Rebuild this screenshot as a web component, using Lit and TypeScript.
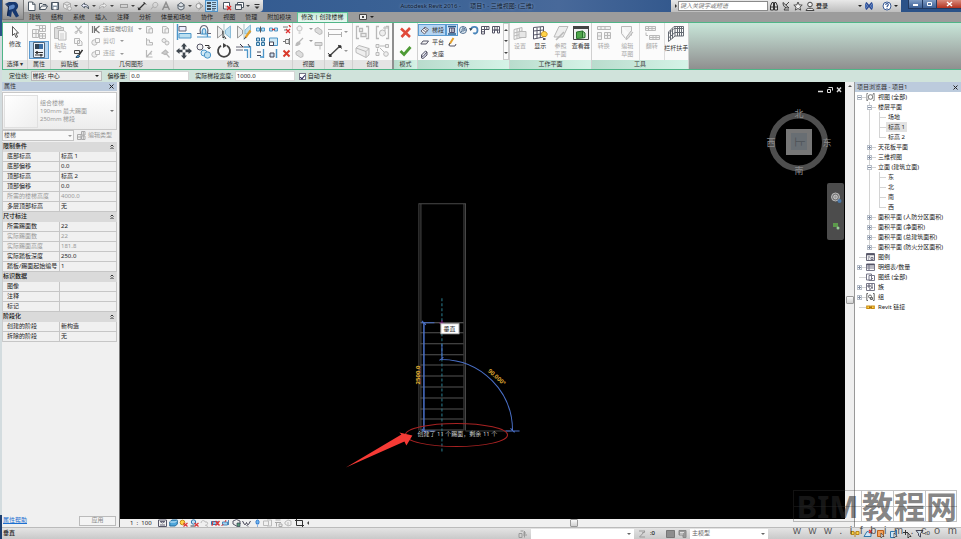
import { LitElement, html, svg, css, nothing, TemplateResult } from "lit";
import { customElement, state } from "lit/decorators.js";
import { classMap } from "lit/directives/class-map.js";

type Art = [number, number, unknown];

const G = "#b9b9b9";
const K = "#4a5560";
const B = "#4d96c9";

const art: Record<string, Art> = {
  newdoc: [10, 10, svg`<path d="M2.5 1h4L9 3.5V9.5H2.5z" fill="#fff" stroke=${K}/><path d="M6.5 1v2.5H9" fill="none" stroke=${K} stroke-width=".8"/>`],
  open: [10, 10, svg`<path d="M1.5 8.5v-6h2.5l1 1h3v1.5M1.5 8.5l2-3.5h6l-2 3.5z" fill="#f4f4f4" stroke=${K}/>`],
  save: [10, 10, svg`<path d="M1.5 1.5h7v7h-7z" fill="#8b98a5" stroke=${K}/><path d="M3 2h4v2.500H3zM3.500 6h3v2.500h-3z" fill="#fff"/>`],
  sync: [10, 10, svg`<path d="M5 1l3.500 1.500v4L5 8.500 1.500 6.500v-4z M1.500 2.500L5 4.500l3.500-2M5 4.500v4" fill="#eee" stroke="#aaa"/><circle cx="7.500" cy="7.500" r="2" fill="#e5e5e5" stroke="#aaa"/>`],
  undo: [10, 10, svg`<path d="M1.500 4.500l3-2.500v1.500c3 0 4.500 1.500 4 4.500-.5-2-2-2.500-4-2.500V7z" fill="#eef" stroke=${K} stroke-width=".9"/>`],
  redo: [10, 10, svg`<path d="M8.500 4.500l-3-2.500v1.500c-3 0-4.500 1.500-4 4.500.5-2 2-2.500 4-2.500V7z" fill="#eee" stroke="#aaa" stroke-width=".9"/>`],
  measure: [10, 10, svg`<path d="M1.500 3v4M8.500 3v4M2 3.500h6M2 6.500h6" fill="none" stroke="#9c9c9c"/>`],
  dim: [10, 10, svg`<path d="M2 8L8 2" stroke="#333" stroke-width="1.200"/><path d="M1 6.500L3.500 9M6.500 1L9 3.500" stroke="#333"/><circle cx="2" cy="8" r="1.200" fill="#333"/>`],
  tag: [10, 10, svg`<path d="M2 8.500l2-3C3 3 5 1 7 1.500s2.500 3 .5 4.500-2.500 0-3.500 0" fill="none" stroke="#aaa"/>`],
  letterA: [10, 10, svg`<path d="M1.500 9L5 1.500 8.500 9M2.800 6.300h4.400" fill="none" stroke="#8e8e8e" stroke-width="1.500"/>`],
  view3d: [10, 10, svg`<path d="M1 4.500L5 1.500l4 3M2 4.500v3l3 1.500 3-1.500v-3L5 6z" fill="#dde4ea" stroke=${K} stroke-width=".9"/>`],
  section: [10, 10, svg`<circle cx="4.500" cy="5" r="2.500" fill="#eee" stroke="#999"/><path d="M4.500 1L9 5 4.500 9" fill="none" stroke="#999"/>`],
  thin: [11, 10, svg`<path d="M1 2h4M1 5h4M1 8h4" stroke="#222" stroke-width="1.400"/><path d="M6 1.500h4M6 3.500h4M6 5.500h4M6 7.500h4M6 9h3" stroke="#345" stroke-width=".8"/>`],
  closehid: [10, 10, svg`<path d="M1.500 4V1.500h6V5M1.500 3v5h3" fill="#fff" stroke=${K}/><path d="M5 5l4 4M9 5L5 9" stroke="#d22" stroke-width="1.500"/>`],
  switchw: [11, 10, svg`<path d="M3.500 1.500h6v5h-6z" fill="#fff" stroke=${K}/><path d="M1.500 3.500h6v5h-6z" fill="#eee" stroke=${K}/><path d="M1.500 4h6" stroke=${K}/>`],
  cust: [8, 8, svg`<path d="M1.500 2.500h5" stroke="#333"/><path d="M1.500 4.500h5L4 7z" fill="#333"/>`],
  binoc: [10, 10, svg`<path d="M1.500 9V5L3 1.500h1.500V9zM5.500 9V1.500H7L8.500 5v4z" fill="#ddd" stroke="#333"/><path d="M4 4.500h2M1.500 6h7" stroke="#333"/>`],
  dish: [10, 10, svg`<path d="M2 1.500c0 4 2 5.500 6 5.500L2 1.500zM5 4l3-3M3 9h5M5 6L3 9" fill="none" stroke="#333" stroke-width=".9"/>`],
  star: [10, 10, svg`<path d="M5 1l1.200 2.900 3 .2-2.300 2 .8 3L5 7.500 2.300 9.100l.8-3L.8 4.100l3-.2z" fill="#f4f4f4" stroke="#444" stroke-width=".9"/>`],
  user: [10, 10, svg`<circle cx="5" cy="3.500" r="2.300" fill="#eee" stroke="#444"/><path d="M1 9.500c0-3 8-3 8 0z" fill="#eee" stroke="#444"/>`],
  exch: [10, 10, svg`<path d="M1 2l3 3-3 3zM9 2L6 5l3 3z" fill="#3f67b0"/><path d="M2 1.500l6 7M8 1.500l-6 7" stroke="#2a4a94" stroke-width="1.500"/>`],
  help: [10, 10, svg`<circle cx="5" cy="5" r="4" fill="#fff" stroke="#3b5c96"/><path d="M3.700 4c0-2 2.800-2 2.600-.2C6.200 4.800 5 4.800 5 6" fill="none" stroke="#2e5190" stroke-width="1.100"/><path d="M5 6.800v1.100" stroke="#2e5190"/>`],
  cursor: [10, 14, svg`<path d="M2.500 1.500v9l2-2 1.500 4 1.500-.7-1.500-3.700h2.500z" fill="#fff" stroke="#444" stroke-width=".9"/>`],
  types: [16, 16, svg`<g fill="#f6f6f6" stroke=${G}><path d="M1.500 5.500h6v8h-6zM8.500 1.500h6v6h-6zM8.500 9.500h6v5h-6zM4.500 1.500h4v4"/><path d="M2 9.500h5M5 6v8M9 4.500h5M11.500 2v5M9 12h5M11.500 10v4"/></g>`],
  props: [14, 16, svg`<path d="M1.500.5h11v15h-11z" fill="#eef3f8" stroke="#50657a"/><path d="M3 2h4v5H3z" fill="#345"/><path d="M7 2h4v5H7z" fill="#3a6ea5"/><path d="M3 10.500h8M3 13h8" stroke="#333"/><path d="M5 9v3M9 12v2.500" stroke="#333" stroke-width="1.500"/>`],
  paste: [14, 16, svg`<path d="M1.500 2.500h9v11h-9z" fill="#ddd" stroke=${G}/><path d="M4 1.500h4v2H4z" fill="#eee" stroke=${G}/><path d="M5.500 5.500H11l2 2v7.500H5.500z" fill="#f6f6f6" stroke=${G}/><path d="M7 9h4M7 11h4M7 13h4" stroke="#ccc"/>`],
  cut: [9, 9, svg`<path d="M1.500 1l5 6M7.500 1l-5 6" stroke=${G} stroke-width="1.200"/><circle cx="2" cy="7.500" r="1" fill="none" stroke=${G}/><circle cx="7" cy="7.500" r="1" fill="none" stroke=${G}/>`],
  copyg: [9, 9, svg`<path d="M.5 1.500h5v5h-5zM3.500 3.500h3l1.500 1.500v3.500H3.500z" fill="#f6f6f6" stroke=${G}/>`],
  match: [9, 9, svg`<path d="M.5 1.500h5v3h-5z" fill="#eee" stroke="#444"/><path d="M8.500 1L5 6" stroke="#333" stroke-width="1.500"/><path d="M2 8.500c1-3 3-2.500 3.500-1.500S4 9 2 8.500z" fill="#4c8fd0" stroke="#245"/>`],
  cope: [10, 9, svg`<path d="M1.500 1v7M3.500 1v7M8.500 1L4 4.500 8.500 8M5 4.500h1" fill="none" stroke="#777" stroke-width="1.200"/>`],
  cutgeo: [10, 9, svg`<circle cx="3.500" cy="5.500" r="2.700" fill="#eee" stroke=${G}/><path d="M4.500 1.500h4v4h-4z" fill="#f8f8f8" stroke=${G}/>`],
  box: [9, 9, svg`<path d="M1.500 1.500h3.500l2.500 2v4.500h-6zM4 8V4l3.500-.5" fill="#f3f3f3" stroke=${G}/>`],
  steps: [9, 9, svg`<path d="M1.500 1v7M1.500 3h3v2.500h3V8h-6" fill="#f3f3f3" stroke=${G}/>`],
  balls: [9, 9, svg`<circle cx="3" cy="3.500" r="2" fill="#eee" stroke=${G}/><circle cx="6" cy="6" r="2" fill="#eee" stroke=${G}/>`],
  split: [9, 9, svg`<path d="M1.500 1v7h6M2 7.500L7 2M4 5h3" fill="none" stroke=${G} stroke-width="1.200"/>`],
  hammer: [9, 9, svg`<path d="M1 4l3.500-3L7 3.500 4 5.500zM5 4.500l3.500 4" fill="#ccc" stroke=${G} stroke-width="1.200"/>`],
  align: [16, 16, svg`<path d="M1.500 0v16" stroke=${B} stroke-width="1.500"/><path d="M3 2.500h7v4.500H3z" fill="#eef" stroke="#667"/><path d="M3 9.500h12v4.500H3z" fill="#bcdff0" stroke=${B}/>`],
  offset: [16, 16, svg`<path d="M1 9.500h3.500C3 4 5.500 1.500 8 1.500S13 4 11.500 9.500H15" fill="none" stroke="#667" stroke-width="1.200"/><path d="M1 13h14M6.500 10C5.500 6 7 4.500 8 4.500s2.500 1.500 1.500 5.500M4.500 10h7v3" fill="#cfe6f4" stroke=${B} stroke-width="1.200"/>`],
  mirror1: [16, 16, svg`<path d="M1.500 2v12l5-4V6z" fill="#eee" stroke="#999"/><path d="M14.500 2v12l-5-4V6z" fill="#bcdff0" stroke="#8bbcd8"/><path d="M8 0v16" stroke="#9bb" stroke-width=".8"/><path d="M7 7v7l1.500-1.500L10 15" fill="none" stroke="#333"/>`],
  mirror2: [16, 16, svg`<path d="M1.500 2v12l5-4V6z" fill="#eee" stroke="#999"/><path d="M14.500 1v8L9 10V6z" fill="#bcdff0" stroke="#8bbcd8"/><path d="M8 0v16" stroke="#9bb" stroke-width=".8"/><path d="M14.500 6.500l-5 7" stroke="#e3a02c" stroke-width="2.200"/><path d="M9.500 13l-1 2" stroke="#333"/>`],
  move: [16, 16, svg`<path d="M8 0l3 3.500H9.200V6.500h3.300V5L16 8l-3.500 3V9.300H9.300v3.200H11L8 16l-3-3.500h1.700V9.300H3.500V11L0 8l3.500-3v1.700h3.200V3.500H5z" fill="#3f474f"/><path d="M6.500 6.500h3v3h-3z" fill="#fff"/>`],
  copy: [16, 16, svg`<circle cx="4" cy="4" r="3" fill="#f4f4f4" stroke="#556"/><path d="M9 2.500h4v3M11.500 4L13 6l1.500-2" fill="none" stroke="#333"/><circle cx="8" cy="10" r="3" fill="#d6ecf7" stroke=${B}/><circle cx="11.500" cy="12" r="3.200" fill="#bcdff0" stroke=${B}/>`],
  rotate: [16, 16, svg`<path d="M5 2.700A6 6 0 1 0 11 2.700" fill="none" stroke="#444" stroke-width="1.800"/><path d="M7 0v5l4-2.500z" fill="#444"/>`],
  trim: [16, 16, svg`<path d="M0 4h8M0 7h7" stroke="#667"/><path d="M8 4h6.500v11M8 7h3.500v8" fill="none" stroke=${B} stroke-width="1.300"/><path d="M4 1l3 3M12 1l2 3" stroke="#334"/>`],
  s1: [9, 9, svg`<path d="M.5 3h3v3h-3zM5.500 3h3v3h-3z" fill="#bcdff0" stroke=${B}/><path d="M4.500 1.500v6" stroke="#555"/>`],
  s2: [9, 9, svg`<path d="M.5 3h3v3h-3zM5.500 3h3v3h-3z" fill="#bcdff0" stroke=${B}/><path d="M3 4.500h3" stroke="#c33" stroke-width="1.500"/>`],
  s3: [9, 9, svg`<path d="M1 2h5M2 5h3" stroke="#777"/><path d="M4 4l4 4M8 4L4 8M7 0l1.500 2" stroke="#d33" stroke-width="1.300"/>`],
  array: [9, 9, svg`<path d="M.5 1h3v3h-3zM5.500 1h3v3h-3zM.5 5.500h3v3h-3zM5.500 5.500h3v3h-3z" fill="#bcdff0" stroke="#2f6f9c"/>`],
  scale: [9, 9, svg`<path d="M.5 1h8v7.500h-8z" fill="#cfe9f5" stroke=${B}/><path d="M.5 5h4v3.500h-4z" fill="#fff" stroke="#445"/>`],
  pin: [9, 9, svg`<path d="M3.500 2.500h3.500v4H3.500zM1 4.500h2.500M7.500 1v7" fill="#eee" stroke="#777"/>`],
  al1: [9, 9, svg`<path d="M1 3h4M1 6.500h4" stroke="#445"/><path d="M7.500 0v9M4 8h3" stroke=${B} stroke-width="1.300"/>`],
  al2: [9, 9, svg`<path d="M1 4h4v4H1z" fill="#cde" stroke="#445"/><path d="M7.500 0v9" stroke=${B} stroke-width="1.500"/>`],
  del: [9, 9, svg`<path d="M1.500 1.500l6 6M7.500 1.500l-6 6" stroke="#d93a2b" stroke-width="2"/>`],
  bulbg: [9, 9, svg`<path d="M3.500 6C1 4 2 1 4.500 1S8 4 5.500 6zM3.500 8h2" fill="#f4f4f4" stroke=${G}/>`],
  brushg: [9, 9, svg`<path d="M8 1L4 5M1 8.500c0-2.500 2-4 3.500-3S3.500 8.500 1 8.500z" fill=${G} stroke=${G} stroke-width="1.200"/>`],
  boxesg: [9, 9, svg`<path d="M1 3l3-1.500 4 3v3L5.500 8.500 1 5.500z" fill="#ddd" stroke=${G}/>`],
  rollg: [9, 9, svg`<path d="M1 1.500h7v3H1zM6 5v3.500" fill="#ddd" stroke=${G}/>`],
  meas1: [16, 14, svg`<path d="M1 4.500h14M1 9.500h14M1.500 7v5M14.500 7v5" stroke="#b0b0b0"/>`],
  meas2: [16, 14, svg`<path d="M2.500 12L13 2" stroke="#444" stroke-width="1.400"/><path d="M1 9l3.500 4M11 1l4 3.500" stroke="#444"/><circle cx="3" cy="11.500" r="1.500" fill="#333"/><circle cx="13" cy="2.500" r="1.500" fill="#333"/>`],
  cr1: [15, 15, svg`<path d="M4 1.500H1.500v12H4M11 1.500h2.500v12H11M4.500 3.500h3v3h-3zM6 8.500h5v3H6z" fill="none" stroke=${G} stroke-width="1.300"/>`],
  cr2: [15, 15, svg`<path d="M4 1.500H1.500v12H4M11 1.500h2.500v12H11" fill="none" stroke=${G} stroke-width="1.300"/><circle cx="7.500" cy="8" r="3" fill="#eee" stroke=${G}/><path d="M10 1v5M8 3h5" stroke=${G}/>`],
  cr3: [16, 15, svg`<path d="M1 5l3-2.500 10 3V12l-3 2.500L1 9.500zM1 5l10 3.500v6M11 8.500L14 5.500" fill="#eee" stroke=${G}/>`],
  cr4: [15, 15, svg`<path d="M1 1.500h3v3H1zM10.500 1.500h3v3h-3zM1 9.500h3v3H1z" fill="#eee" stroke=${G}/><path d="M5 3h5M2.500 5.500v3" stroke=${G}/><circle cx="11" cy="11" r="2.300" fill="#eee" stroke=${G}/><path d="M5 5l4 4" stroke=${G}/>`],
  cancel: [13, 13, svg`<path d="M2 2.500l9 8.500M11 2L2.500 11" stroke="#e04a3a" stroke-width="2.600"/>`],
  ok: [13, 13, svg`<path d="M1.500 7L5 10.500 11.500 3" fill="none" stroke="#4d9a35" stroke-width="2.800"/>`],
  run: [9, 9, svg`<path d="M1 5l4-4 3.500 2.500-4 4.500zM2.500 3.500L6 6.300M4 2l3.300 2.800" fill="#f4f4f4" stroke="#667"/>`],
  land: [9, 9, svg`<path d="M.8 6L3 3h5.500L6.300 6z" fill="#f4f4f4" stroke="#556"/>`],
  supp: [9, 9, svg`<path d="M1.500 8V5l4-4 1.500 1v3l-4 3.500zM1.500 5.500L3 6.500 7 2" fill="#dde" stroke="#556"/>`],
  g1: [10, 10, svg`<path d="M1 1.500h8M1 9h8" stroke="#2b5f8f" stroke-width="1.300"/><path d="M2.500 3h5v4.500h-5zM4.300 3v4.500M6 3v4.500" fill="#fff" stroke="#446" stroke-width=".9"/>`],
  g2: [10, 10, svg`<circle cx="5" cy="5" r="3.500" fill="#e4eef6" stroke="#5a7796"/><circle cx="5" cy="5" r="1.200" fill="none" stroke="#5a7796"/><path d="M5 1v3M9 5H6M2 8l2-2M8 2L6 4" stroke="#5a7796"/>`],
  g3: [10, 10, svg`<path d="M2 4.500C2.500 1 8.500 1 8.500 5S5 9 4.500 7.500" fill="none" stroke="#4a86bb" stroke-width="1.800"/><path d="M0 3l3.500.5L1.500 6z" fill="#345"/>`],
  g4: [10, 10, svg`<path d="M1.500 9V1.500h7.500v3H4.500V9zM1.500 4.500h3M1.500 6.800h3M4.500 1.500v3M6.800 1.500v3" fill="#fff" stroke="#556"/>`],
  g5: [10, 10, svg`<path d="M1.500 8V1.500h7V8h-2V5h-3v3zM3.800 1.500V5M6.200 1.500V5M1.500 5h7" fill="#fff" stroke="#556"/>`],
  pencil: [10, 10, svg`<path d="M1.500 8l1.500 1h5L9 7" fill="none" stroke="#556"/><path d="M6.500 1L3 6.500" stroke="#e3a02c" stroke-width="2"/><path d="M3 6l-1 2" stroke="#333"/>`],
  setp: [16, 16, svg`<path d="M2 4.500l8-2v10l-8 2z M2 8l8-2M2 11l8-2M5 4v10M7.500 3v10" fill="#f4f4f4" stroke=${G}/><path d="M7 6.500h7v6H7z" fill="#e6e6e6" stroke=${G}/>`],
  show: [16, 16, svg`<path d="M1.500 2.500l10-1v10.500l-10 2zM1.500 6l10-1M1.500 10l10-1.500M5 2.500v11M8.300 2v11" fill="#fff" stroke="#556"/><path d="M10.500 11.500c-3-3 0-5 1.700-5s4.600 2 1.800 5z" fill="#ffd44a" stroke="#c8921a"/><path d="M11 14h2.500" stroke="#556" stroke-width="2"/>`],
  refp: [16, 16, svg`<path d="M1 12L6 1.500h9L10 12z" fill="#eee" stroke=${G}/><path d="M3 15l8-8" stroke=${G} stroke-width="1.600"/>`],
  viewer: [16, 16, svg`<path d="M.5 1.500h15v13H.5z" fill="#f0f0f0" stroke="#444"/><path d="M0 1h16v3H0z" fill="#444"/><path d="M3.500 7l6-1v7l-6 .5z" fill="#4fa64a" stroke="#27702a"/><path d="M9.500 6L12 8v4.500L9.500 13z" fill="#8aca86" stroke="#27702a"/>`],
  conv: [16, 16, svg`<path d="M1.500 1.500h13v3h-13zM1.500 7.500h4v7h-4zM8.500 7.500h6v6h-6zM1.500 11h4M5 1.500v3M9 1.500v3M8.500 10.500h6M11.500 7.500v6" fill="#f0f0f0" stroke=${G}/>`],
  edit: [16, 16, svg`<path d="M2.500 1.500h10v9M2.500 1.500v7l4 5" fill="#f4f4f4" stroke=${G}/><path d="M14 7l-5 6.500-2 1 .5-2.500L12 6" fill="#ddd" stroke=${G}/>`],
  flip: [16, 16, svg`<path d="M1.500 1.500h10v4h-10zM5.500 10.500h10v4h-10zM1.500 3.500h10M5.500 12.500h10M4.500 1.500v4M8 1.500v4M9 10.500v4M12 10.500v4" fill="#f2f2f2" stroke=${G}/><path d="M2 7.500v3h2" fill="none" stroke=${G}/>`],
  rail: [18, 18, svg`<path d="M1.500 7L7 1.500h9.500M1.500 9L7 3.500h9.500M1.500 16.500L8 11h8.500M1.500 7v9.500M3.500 5v10M5.500 3.500v10M8 1.500V11M10.500 1.500V11M12.500 1.500V11M14.500 1.500V11M16.500 1.500V11M1.500 13L8 7.500h8.500" fill="none" stroke="#666b74"/>`],
  typeicon: [9, 9, svg`<path d="M.5 3.500h3.500v5H.5zM4.500 .5H8v3.500H4.500zM4.500 5H8v3.500H4.500zM.5 6H4M6.300 1v7" fill="#eee" stroke="#aaa"/>`],
  views: [9, 8, svg`<circle cx="4.500" cy="4" r="2.300" fill="#fff" stroke="#666" stroke-width=".9"/><path d="M2 .5H.8v7H2M7 .5h1.200v7H7M2.500 6L1 7.500M6.500 2L8 .5" fill="none" stroke="#777" stroke-width=".8"/>`],
  legend: [9, 8, svg`<path d="M.5.500h8v7h-8z" fill="#eee" stroke="#667"/><path d="M.5 1.500h8" stroke="#556" stroke-width="1.500"/><path d="M2 4h2M2 6h1M5 4.500h2v2H5z" stroke="#778" fill="none"/>`],
  sched: [9, 8, svg`<path d="M.5 1h8v6.500h-8zM.5 3h8M.5 5h8M3 1v6.500" fill="#fff" stroke="#778"/><path d="M.5 1.500h8" stroke="#556" stroke-width="1.200"/>`],
  sheets: [9, 8, svg`<path d="M.5 1h5v6h-5z M3 2.500h5.500v5H3z" fill="#fff" stroke="#778"/><path d="M5 5.500h2" stroke="#778"/>`],
  family: [9, 8, svg`<path d="M.5.500h8v7h-8z" fill="#fff" stroke="#778"/><path d="M2 2h2v2H2zM5 5h2M3 6h2M6 1v4" stroke="#556" fill="none"/>`],
  group: [9, 8, svg`<path d="M2 .5H.8v7H2M7 .5h1.200v7H7" fill="none" stroke="#666"/><circle cx="4" cy="3.500" r="1.500" fill="none" stroke="#666"/><path d="M4.500 4.500h2v2h-2z" fill="#ccc" stroke="#666"/>`],
  link: [9, 8, svg`<path d="M.8 3h3v2.500h-3zM5.200 3h3v2.500h-3z" fill="#ffd54a" stroke="#c98a12" stroke-width="1.200"/><path d="M3 4.300h3" stroke="#a86e0a" stroke-width="1.200"/>`],
  v1: [9, 8, svg`<path d="M.5 1h8v6.500h-8z" fill="#eee" stroke="#556"/><path d="M2 2.500h5L4.500 4zM2 6h5" stroke="#667" fill="#fff"/>`],
  v2: [9, 8, svg`<path d="M.8 3l2-2h5.500v4l-2 2H.8z" fill="#4fa7dc" stroke="#216a9c"/><path d="M1 3h5.500L8 1.500" stroke="#cfeaf8" fill="none"/>`],
  v3: [9, 8, svg`<circle cx="3.500" cy="3.500" r="2.300" fill="#ffd54a" stroke="#c98a12"/><path d="M4.500 4l4 3.500M8.500 4l-4 3.500" stroke="#d33" stroke-width="1.200"/>`],
  v4: [9, 8, svg`<circle cx="3.500" cy="3" r="2.200" fill="#bfe0f5" stroke="#2f77ad"/><path d="M.5 7h4" stroke="#345"/><path d="M4.500 4l4 3.500M8.500 4l-4 3.500" stroke="#d33" stroke-width="1.200"/>`],
  v5: [9, 8, svg`<path d="M1 4c0-3 4-3 4-1h2c1.500 2 0 3-1 3M5 6l3 1.500" stroke="#bbb" fill="none"/>`],
  v6: [9, 8, svg`<path d="M.5 2.500h6v3h-6z" fill="#8fc7ea" stroke="#2f77ad"/><path d="M4.500 2l4 4.500M8.500 2l-4 4.500" stroke="#d33" stroke-width="1.400"/><path d="M1 7l1-5" stroke="#d33"/>`],
  v7: [9, 8, svg`<path d="M1.500 3h5v3h-5zM7.500 1v5" fill="#a5d2ee" stroke="#4d86b8"/><path d="M.5 6.500l2-1M4 3l1-2" stroke="#d33"/>`],
  v8: [9, 8, svg`<path d="M1 2l3.500-1.500L8 2v3L4.500 7 1 5z" fill="#eee" stroke="#556"/><path d="M5 4h3v3.500H5z" fill="#5a9a78" stroke="#345" stroke-width=".7"/>`],
  v9: [9, 8, svg`<path d="M.5 2l2 3.500h1l1-2 1 2h1l2-3.500M4.500 6L6 7.500" fill="none" stroke="#445"/>`],
  v10: [9, 8, svg`<path d="M3.500 5c-1-2-.5-4 1-4s2 2 1 4zM4 7h1" fill="#6fb7f0" stroke="#2f77cd"/>`],
  v11: [9, 8, svg`<path d="M.5 2h5v4.500h-5zM4 1h4.500v6H4" fill="#f0f0f0" stroke="#bbb"/>`],
  v12: [9, 8, svg`<path d="M1.500 1h5M1 3.500h6M2.500 3.500v4M5 5h3v2.500H5z" fill="none" stroke="#aaa"/>`],
  v13: [9, 8, svg`<path d="M1 3l3-2 3 1v4L4 7 1 5zM4 3v4" fill="#f0f0f0" stroke="#bbb"/>`],
  v14: [9, 8, svg`<path d="M1.500 1.500h6v5h-6zM0 1.500h3M6 6.500h3M1.500 0v3M7.500 5v3" fill="none" stroke="#333"/>`],
  ws: [10, 8, svg`<path d="M1 3.500h3v4H1zM5 3h3M6.500 1v6.500M5 5h4M2.500 1h3" fill="none" stroke="#999"/>`],
  fil: [10, 8, svg`<path d="M2 1h6L2.500 7H8M5 3l3-1" fill="none" stroke="#999"/>`],
  grayA: [9, 8, svg`<path d="M.5.500h8v7h-8z" fill="#8d8d8d" stroke="#777"/>`],
  grayB: [9, 8, svg`<path d="M1 .5h7v7H5V5H1z" fill="#999" stroke="#888"/><path d="M2 2.500h4M2 4h3" stroke="#ddd"/>`],
  y1: [10, 9, svg`<path d="M1 2.500h3v3H1zM6 2.500h3v3H6zM4 4h2M5 5v3" fill="#ffd54a" stroke="#b9861a"/>`],
  y2: [10, 9, svg`<path d="M1 7.500l3-5 4 1v4z" fill="#cde6f6" stroke="#2f77ad"/><path d="M6 1l3 3M9 1L6 4" stroke="#d33" stroke-width="1.200"/>`],
  y3: [10, 9, svg`<path d="M1.500 1.500h6v6h-6z" fill="#f3a25c" stroke="#b8601a"/><path d="M5 4v5l1.500-1.500H8z" fill="#fff" stroke="#333" stroke-width=".7"/>`],
  y4: [10, 9, svg`<path d="M1.500 2.500h4l2-1.500v6l-2 1.500h-4z" fill="#cde6f6" stroke="#2f77ad"/><path d="M5 4v5l1.500-1.500H8z" fill="#fff" stroke="#333" stroke-width=".7"/>`],
  y5: [10, 9, svg`<path d="M3.500 1v5M1 3.500h5M6 4v5l1.500-1.500H9z" fill="#fff" stroke="#333"/>`],
  y6: [10, 9, svg`<path d="M1 1.500h7L5.500 4.500V8L3.500 6.500v-2z" fill="#cfe0ec" stroke="#445"/>`],
};

const icon = (name: string) => {
  const [w, h, body] = art[name];
  return html`<svg class="ic" width=${w} height=${h} viewBox="0 0 ${w} ${h}" aria-hidden="true">${body}</svg>`;
};
const tool = (name: string, label = name) => html`<button class="t" aria-label=${label}>${icon(name)}</button>`;
const caret = html`<i class="dd"></i>`;
const gap = html`<i class="gap"></i>`;

interface Prop { name: string; value: string; dim?: boolean }
interface PropGroup { title: string; rows: Prop[] }
const p = (name: string, value = "", dim = false): Prop => ({ name, value, dim });

const groups: PropGroup[] = [
  { title: "限制条件", rows: [p("底部标高", "标高 1"), p("底部偏移", "0.0"), p("顶部标高", "标高 2"), p("顶部偏移", "0.0"), p("所需的楼梯高度", "4000.0", true), p("多层顶部标高", "无")] },
  { title: "尺寸标注", rows: [p("所需踢面数", "22"), p("实际踢面数", "22", true), p("实际踢面高度", "181.8", true), p("实际踏板深度", "250.0"), p("踏板/踢面起始编号", "1")] },
  { title: "标识数据", rows: [p("图像"), p("注释"), p("标记")] },
  { title: "阶段化", rows: [p("创建的阶段", "新构造"), p("拆除的阶段", "无")] },
];

interface Node { label: string; icon?: string; open?: boolean; sel?: boolean; kids?: Node[]; leaf?: boolean }
const tree: Node[] = [
  { label: "视图 (全部)", icon: "views", open: true, kids: [
    { label: "楼层平面", open: true, kids: [{ label: "场地", leaf: true }, { label: "标高 1", leaf: true, sel: true }, { label: "标高 2", leaf: true }] },
    { label: "天花板平面" },
    { label: "三维视图" },
    { label: "立面 (建筑立面)", open: true, kids: ["东", "北", "南", "西"].map((label) => ({ label, leaf: true })) },
    { label: "面积平面 (人防分区面积)" },
    { label: "面积平面 (净面积)" },
    { label: "面积平面 (总建筑面积)" },
    { label: "面积平面 (防火分区面积)" },
  ] },
  { label: "图例", icon: "legend", leaf: true },
  { label: "明细表/数量", icon: "sched" },
  { label: "图纸 (全部)", icon: "sheets", leaf: true },
  { label: "族", icon: "family" },
  { label: "组", icon: "group" },
  { label: "Revit 链接", icon: "link", leaf: true },
];

const base = css`
  * { box-sizing: border-box; }
  button, input, select { font: inherit; color: inherit; margin: 0; padding: 0; border: 0; background: none; border-radius: 0; appearance: none; min-width: 0; }
  button { display: flex; align-items: center; justify-content: center; white-space: nowrap; }
  .ic { display: block; flex: none; }
  .dd { flex: none; width: 0; height: 0; border: 2px solid transparent; border-top-color: currentColor; border-bottom: 0; }
`;

@customElement("title-bar")
export class TitleBar extends LitElement {
  static styles = [base, css`
    :host { display: flex; height: 12px; background: linear-gradient(90deg, #29518a, #3c6396 45%, #48699a 58%, #2b5288 75%); align-items: stretch; }
    .qat { display: flex; align-items: center; padding-left: 23px; background: linear-gradient(#e8e8e8, #bdbdbd); color: #444; border-radius: 0 0 4px 0; }
    .t { width: 12px; height: 12px; }
    .dd { margin: 0 1px; }
    .gap { width: 3px; }
    .on { width: 13px; background: #b6dbf5; border: 1px solid #4f93c9; }
    .title { flex: 1; display: flex; justify-content: center; align-items: center; color: #0d1a2e; white-space: pre; overflow: hidden; text-shadow: 0 0 3px #9fb4d2; }
    .info { display: flex; align-items: center; background: linear-gradient(#e8e8e8, #bdbdbd); color: #222; padding-right: 2px; }
    .side { border: 2px solid transparent; border-left-color: #333; border-right: 0; margin: 0 1px 0 4px; width: 0; height: 0; }
    .q { width: 90px; height: 10px; background: #fff; border: 1px solid #8a8a8a; padding: 0 1px; font-style: italic; }
    .q::placeholder { color: #777; opacity: 1; }
    .login { margin-right: 29px; font-weight: 500; }
    .win { display: flex; margin-left: 7px; height: 9px; color: #fff; border: 1px solid #22395f; border-top: 0; border-right: 0; }
    .win button { width: 14px; background: linear-gradient(#7f9cc4, #3a5f95); border-right: 1px solid #22395f; }
    .win .x { width: 24px; background: linear-gradient(#d98b7c, #b33320); border: 0; }
  `];

  render() {
    return html`
      <div class="qat">
        ${tool("newdoc", "新建")}${tool("open", "打开")}${tool("save", "保存")}${tool("sync", "同步")}${caret}
        ${tool("undo", "放弃")}${caret}${tool("redo", "重做")}${caret}${gap}
        ${tool("measure", "测量")}${caret}${tool("dim", "标注")}${tool("tag", "标记")}${tool("letterA", "文字")}${gap}
        ${tool("view3d", "三维视图")}${caret}${tool("section", "剖面")}
        <button class="t on" aria-label="细线">${icon("thin")}</button>${gap}
        ${tool("closehid", "关闭隐藏窗口")}${tool("switchw", "切换窗口")}${caret}${tool("cust", "自定义")}
      </div>
      <div class="title">Autodesk Revit 2016 -      项目1 - 三维视图: (三维)</div>
      <div class="info">
        <i class="side"></i><input class="q" placeholder="键入关键字或短语" aria-label="搜索" />
        ${tool("binoc", "搜索")}${tool("dish", "通讯中心")}${tool("star", "收藏夹")}${tool("user", "用户")}
        <span class="login">登录</span>${caret}${tool("exch", "Exchange")}<i class="gap"></i><i class="gap"></i>${tool("help", "帮助")}${caret}
      </div>
      <div class="win">
        <button aria-label="最小化"><svg width="7" height="6"><path d="M1 4h5" stroke="#fff" stroke-width="2"/></svg></button>
        <button aria-label="还原"><svg width="7" height="6"><path d="M1.500 1.500h4v3h-4z" fill="none" stroke="#fff"/></svg></button>
        <button class="x" aria-label="关闭"><svg width="7" height="6"><path d="M1 1l5 4M6 1L1 5" stroke="#fff" stroke-width="1.500"/></svg></button>
      </div>`;
  }
}

@customElement("ribbon-bar")
export class RibbonBar extends LitElement {
  @state() private mode = "梯段";

  static styles = [base, css`
    :host { display: block; }
    .tabs { display: flex; height: 10px; background: #9c9c9c; padding-left: 22px; align-items: stretch; }
    .tabs button { padding: 0 5px; color: #222; line-height: 9px; }
    .tabs .act { margin-left: 1px; background: linear-gradient(#c5ead9, #e9f8f1); border: 1px solid #5fc598; border-bottom: 0; padding: 0 3px; }
    .tabs .mini { margin-left: 6px; gap: 3px; }
    .body { display: flex; height: 48px; border: 1px solid #4fb587; border-width: 1px 0 1px 1px; background: linear-gradient(#c8e6d9, #8f8f8f); }
    .panel { flex: none; display: flex; flex-direction: column; background: #fbfbfb; border-right: 1px solid #d0d0d0; }
    .in { flex: 1; display: flex; align-items: stretch; }
    .cap { height: 9px; line-height: 8px; background: #e4e4e4; text-align: center; color: #333; }
    .ctx .cap { background: linear-gradient(90deg, #b9dccd, #d5f3e7); }
    .w24 { width: 25px; } .w22 { width: 23px; } .w38 { width: 38px; } .w85 { width: 85px; } .w119 { width: 119px; }
    .w32 { width: 32px; } .w28 { width: 28px; } .w41 { width: 41px; border-right: 2px solid #8f8f8f; } .w23 { width: 24px; } .w92 { width: 92px; } .w82 { width: 82px; } .w97 { width: 97px; }
    .big { flex: 1; flex-direction: column; justify-content: flex-start; padding-top: 1px; color: #333; line-height: 8px; }
    .big .ic { margin: 1px 0; }
    .big .dd { margin-top: 1px; }
    .off { color: #aaa; }
    .col { display: flex; flex-direction: column; justify-content: space-around; flex: 1; align-items: center; }
    .row { display: flex; align-items: center; gap: 2px; }
    .row .dd { margin-left: 3px; color: #999; }
    .left { align-items: flex-start; flex: none; padding-left: 2px; }
    .tight .row { gap: 0; }
    .tight .dd { margin-left: 1px; }
    .dark { color: #777; }
    .hl { background: #b4d5f3; border: 1px solid #5c9bd1; width: 20px; height: 18px; }
    .bigs, .smalls { display: grid; place-items: center; }
    .bigs { grid-template-columns: repeat(4, 20px); }
    .smalls { grid-template-columns: repeat(3, 13px); }
    .quad { flex: 1; display: grid; grid-template-columns: 1fr 1fr; place-items: center; }
    .modes { width: 28px; display: flex; flex-direction: column; padding-top: 1px; color: #333; }
    .modes button { height: 12px; justify-content: flex-start; padding-left: 1px; gap: 3px; border: 1px solid transparent; }
    .modes .on { background: #b4d5f3; border-color: #5c9bd1; }
    .gal { width: 57px; display: grid; grid-template-columns: repeat(5, 11px); grid-auto-rows: 12px; padding-top: 1px; place-items: center; }
    .gal .on { background: #cfe5f7; outline: 1px solid #5c9bd1; }
    .spin { width: 6px; display: flex; flex-direction: column; justify-content: space-around; align-items: center; border: 1px solid #ccc; color: #444; }
    .spin .up { border-top: 0; border-bottom: 2px solid #444; }
    .sep { border-left: 1px solid #ddd; }
    .opts { display: flex; align-items: center; height: 12px; background: #d0e3db; padding-left: 7px; color: #222; }
    .opts label { display: flex; align-items: center; gap: 2px; margin-right: 6px; }
    .opts input[type="text"] { width: 60px; height: 10px; background: #fff; border: 1px solid #d5d5d5; padding: 0 1px; }
    .pick { display: grid; align-items: center; }
    .pick > * { grid-area: 1 / 1; }
    .pick select { width: 71px; height: 10px; background: #eee; border: 1px solid #bbb; padding: 0 1px; }
    .pick .dd { justify-self: end; margin-right: 3px; pointer-events: none; }
    .opts input[type="checkbox"] { width: 7px; height: 7px; background: #fff; border: 1px solid #778; display: grid; place-items: center; }
    .opts input:checked::before { content: ""; width: 2px; height: 4px; border: 1px solid #225; border-width: 0 1px 1px 0; transform: rotate(40deg); }
    .opts .wide { margin-right: 4px; }
  `];

  private panel(cls: string, cap: unknown, body: TemplateResult, ctx = false) {
    return html`<section class="panel ${cls} ${ctx ? "ctx" : ""}"><div class="in">${body}</div><div class="cap">${cap}</div></section>`;
  }

  private big(name: string, lines: string[], off = false, extra: unknown = nothing) {
    return html`<button class="big ${off ? "off" : ""}">${icon(name)}${lines.map((l) => html`<span>${l}</span>`)}${extra}</button>`;
  }

  render() {
    const tabs = ["建筑", "结构", "系统", "插入", "注释", "分析", "体量和场地", "协作", "视图", "管理", "附加模块"];
    const modes: [string, string][] = [["run", "梯段"], ["land", "平台"], ["supp", "支座"]];
    return html`
      <nav class="tabs">
        ${tabs.map((t) => html`<button>${t}</button>`)}
        <button class="act">修改 | 创建楼梯</button>
        <button class="mini" aria-label="最小化功能区"><svg width="8" height="6"><path d="M.5.500h7v5h-7z" fill="#eee" stroke="#444"/><path d="M3 2h2v2H3z" fill="#444"/></svg>${caret}</button>
      </nav>
      <div class="body">
        ${this.panel("w24", "选择 ▾", this.big("cursor", ["修改"]))}
        ${this.panel("w22", "属性", html`<div class="col">${tool("types", "类型属性")}<button class="hl" aria-label="属性">${icon("props")}</button></div>`)}
        ${this.panel("w38", "剪贴板", html`${this.big("paste", ["粘贴"], true, caret)}<div class="col">${tool("cut", "剪切")}${tool("copyg", "复制")}${tool("match", "匹配类型")}</div>`)}
        ${this.panel("w85", "几何图形", html`
          <div class="col left off">
            <div class="row dark">${icon("cope")}连接端切割${caret}</div>
            <div class="row">${icon("cutgeo")}剪切${caret}</div>
            <div class="row">${icon("cutgeo")}连接${caret}</div>
          </div>
          <div class="col">${tool("box")}${tool("steps")}${tool("split")}</div>
          <div class="col">${tool("box")}${tool("balls")}${tool("hammer")}</div>`)}
        ${this.panel("w119", "修改", html`
          <div class="bigs">${["align", "offset", "mirror1", "mirror2", "move", "copy", "rotate", "trim"].map((n) => tool(n))}</div>
          <div class="smalls">${["s1", "s2", "s3", "array", "scale", "pin", "al1", "al2", "del"].map((n) => tool(n))}</div>`)}
        ${this.panel("w32", "视图", html`
          <div class="col left"><div class="row">${icon("bulbg")}${caret}</div><div class="row">${icon("brushg")}${caret}</div>${icon("boxesg")}</div>
          <div class="col">${tool("boxesg")}${tool("rollg")}<i class="ic"></i></div>`)}
        ${this.panel("w28", "测量", html`<div class="col left tight"><div class="row">${icon("meas1")}${caret}</div><div class="row">${icon("meas2")}${caret}</div></div>`)}
        ${this.panel("w41", "创建", html`<div class="quad">${["cr1", "cr2", "cr3", "cr4"].map((n) => tool(n))}</div>`)}
        ${this.panel("w23", "模式", html`<div class="col">${tool("cancel", "取消")}${tool("ok", "完成")}</div>`, true)}
        ${this.panel("w92", "构件", html`
          <div class="modes">${modes.map(([i, m]) => html`<button class=${classMap({ on: this.mode === m })} @click=${() => (this.mode = m)}>${icon(i)}${m}</button>`)}</div>
          <div class="gal"><button class="on" aria-label="直梯">${icon("g1")}</button>${["g2", "g3", "g4", "g5", "pencil"].map((n) => tool(n))}</div>
          <div class="spin"><i class="dd up"></i><i class="dd"></i><i class="dd"></i></div>`, true)}
        ${this.panel("w82", "工作平面", html`${this.big("setp", ["设置"], true)}${this.big("show", ["显示"])}${this.big("refp", ["参照", "平面"], true)}${this.big("viewer", ["查看器"])}`, true)}
        ${this.panel("w97", "工具", html`${this.big("conv", ["转换"], true)}${this.big("edit", ["编辑", "草图"], true)}<i class="sep"></i>${this.big("flip", ["翻转"], true)}<i class="sep"></i>${this.big("rail", ["栏杆扶手"])}`, true)}
      </div>
      <div class="opts">
        <label>定位线: <span class="pick"><select><option>梯段: 中心</option></select>${caret}</span></label>
        <label>偏移量: <input type="text" value="0.0" /></label>
        <label class="wide">实际梯段宽度: <input type="text" value="1000.0" /></label>
        <label><input type="checkbox" checked />自动平台</label>
      </div>`;
  }
}

@customElement("property-palette")
export class PropertyPalette extends LitElement {
  static styles = [base, css`
    :host { display: flex; flex-direction: column; background: #f0f0f0; border-right: 1px solid #777; padding-right: 2px; color: #222; }
    header { display: flex; justify-content: space-between; align-items: center; height: 9px; background: #bccbdd; padding: 0 3px 0 2px; color: #333; }
    .type { display: flex; align-items: center; gap: 2px; height: 38px; margin-top: 1px; padding: 1px; border: 1px solid #c8c8c8; background: linear-gradient(#fff, #ececec); color: #999; line-height: 8px; }
    .thumb { width: 34px; height: 33px; border: 1px solid #e0e0e0; background: linear-gradient(135deg, #fff, #eee); }
    .type .names { flex: 1; }
    .type .dd { margin-right: 1px; color: #777; }
    .edit { display: flex; height: 11px; align-items: center; gap: 3px; color: #999; margin-bottom: 1px; }
    .pick { display: grid; align-items: center; }
    .pick > * { grid-area: 1 / 1; }
    .pick select { width: 72px; height: 11px; background: #f8f8f8; border: 1px solid #c4c4c4; padding: 0 1px; color: #555; }
    .pick .dd { justify-self: end; margin-right: 2px; pointer-events: none; }
    .edit button { gap: 2px; }
    table { border-collapse: separate; border-spacing: 0; table-layout: fixed; width: 100%; border-left: 1px solid #ccc; }
    th, td { height: 10px; line-height: 9px; padding: 0; text-align: left; font-weight: 400; white-space: nowrap; border-bottom: 1px solid #c6c6c6; border-right: 1px solid #c6c6c6; }
    tbody th { padding-left: 4px; width: 50%; }
    td { padding-left: 1px; }
    .head th { background: #dadada; font-weight: 500; padding: 0; border-color: #dadada; color: #111; }
    .head div { display: flex; justify-content: space-between; align-items: center; padding-right: 2px; }
    .dim { color: #999; }
    footer { margin-top: auto; display: flex; justify-content: space-between; align-items: center; height: 12px; padding: 0 1px; margin-bottom: 1px; }
    footer a { color: #1c6fd0; }
    footer button { width: 37px; height: 10px; border: 1px solid #bbb; background: #f4f4f4; color: #888; }
  `];

  render() {
    return html`
      <header>属性<button aria-label="关闭"><svg width="5" height="5"><path d="M.5.500l4 4M4.500.500l-4 4" stroke="#222"/></svg></button></header>
      <div class="type"><div class="thumb"></div><div class="names">组合楼梯<br />190mm 最大踢面<br />250mm 梯段</div>${caret}</div>
      <div class="edit"><span class="pick"><select aria-label="类别"><option>楼梯</option></select>${caret}</span><button>${icon("typeicon")}编辑类型</button></div>
      <table><tbody>
        ${groups.map((g) => html`
          <tr class="head"><th colspan="2"><div>${g.title}<svg width="4" height="6"><path d="M.5 2.500L2 1l1.500 1.500M.5 5L2 3.500 3.500 5" fill="none" stroke="#333"/></svg></div></th></tr>
          ${g.rows.map((r) => html`<tr class=${classMap({ dim: !!r.dim })}><th scope="row">${r.name}</th><td>${r.value}</td></tr>`)}`)}
      </tbody></table>
      <footer><a href="#help">属性帮助</a><button>应用</button></footer>`;
  }
}

@customElement("project-browser")
export class ProjectBrowser extends LitElement {
  static styles = [base, css`
    :host { display: flex; flex-direction: column; background: #fff; border-left: 1px solid #999; color: #222; }
    header { display: flex; justify-content: space-between; align-items: center; height: 10px; background: #bccbdd; padding: 0 3px 0 2px; color: #333; }
    ul { list-style: none; margin: 0; padding: 0; position: relative; }
    .root { padding-left: 2px; }
    ul ul { padding-left: 10px; }
    ul ul::before { content: ""; position: absolute; left: 12px; top: 0; bottom: 5px; border-left: 1px solid #d4d4d4; }
    .line { display: flex; align-items: center; height: 10px; line-height: 10px; white-space: nowrap; }
    .tog { width: 5px; height: 5px; border: 1px solid #b9c0ca; background: #fff; position: relative; flex: none; }
    .tog path { stroke: #8490a4; }
    .tog svg { position: absolute; inset: -1px; }
    .stub { width: 5px; flex: none; }
    .dash { width: 4px; border-top: 1px solid #d4d4d4; flex: none; margin-right: 2px; }
    .leaf > .line > .dash { width: 7px; margin-left: -3px; }
    .line .ic { margin: 0 3px 0 -2px; }
    .sel { background: #e2e2e2; padding: 0 2px; margin-left: -2px; }
  `];

  private node(n: Node): TemplateResult {
    return html`<li class=${classMap({ leaf: !!n.leaf })}>
      <div class="line">
        ${n.leaf ? html`<i class="stub"></i>` : html`<button class="tog" aria-label="展开"><svg width="5" height="5"><path d=${n.open ? "M1 2.5h3" : "M1 2.5h3M2.500 1v3"}/></svg></button>`}
        <i class="dash"></i>${n.icon ? icon(n.icon) : nothing}<span class=${classMap({ sel: !!n.sel })}>${n.label}</span>
      </div>
      ${n.kids ? html`<ul>${n.kids.map((k) => this.node(k))}</ul>` : nothing}
    </li>`;
  }

  render() {
    return html`<header>项目浏览器 - 项目1<button aria-label="关闭"><svg width="5" height="5"><path d="M.5.500l4 4M4.500.500l-4 4" stroke="#222"/></svg></button></header>
      <ul class="root">${tree.map((n) => this.node(n))}</ul>`;
  }
}

@customElement("model-view")
export class ModelView extends LitElement {
  static styles = [base, css`
    :host { display: grid; grid-template: minmax(0, 1fr) 9px / minmax(0, 1fr) 9px; background: #ececec; }
    .canvas { position: relative; background: #000; overflow: hidden; }
    .scene { display: block; width: 100%; height: 100%; }
    .doc { position: absolute; right: 3px; top: 4px; display: flex; gap: 3px; }
    .cube { position: absolute; right: 11px; top: 24px; }
    .nav { position: absolute; right: 1px; top: 101px; width: 17px; height: 57px; background: #4c4c4c; border-radius: 2px; display: flex; flex-direction: column; align-items: center; justify-content: space-around; }
    .vs { display: flex; flex-direction: column; align-items: center; padding: 3px 0; background: #efefef; color: #555; }
    .vs .up { border-top: 0; border-bottom: 2px solid #555; }
    .vs .thumb { margin-top: 209px; }
    .thumb { width: 8px; height: 8px; border: 1px solid #999; border-radius: 1px; background: linear-gradient(#fafafa, #d0d0d0); }
    .bar { grid-column: 1 / -1; display: flex; align-items: center; background: #f0f0f0; padding-left: 10px; color: #222; }
    .scale { width: 28px; white-space: pre; }
    .tools { display: flex; justify-content: space-between; width: 146px; }
    .lt { border: 2px solid transparent; border-right-color: #444; border-left: 0; margin: 0 261px 0 3px; }
    text { font-family: "Noto Sans", "Noto Sans CJK SC", sans-serif; }
  `];

  render() {
    const treads = Array.from({ length: 10 }, (_, i) => 250.5 + Math.round(i * 10.8));
    return html`
      <div class="canvas">
        <svg class="scene" viewBox="1 0 724 436" preserveAspectRatio="xMinYMin meet">
          <g fill="none" stroke="#4a4a4a">
            <path d="M299.500 348V121.500h46.500V348M301.500 122v226M344.500 122v226"/>
            <path d="M301 240.500h43" stroke="#666"/>
            ${treads.map((y) => svg`<path d="M301 ${y}h43" stroke="#555"/>`)}
            <path d="M346 348.500h45" stroke="#3c3c3c"/>
          </g>
          <path d="M322.500 216v153" stroke="#2b7d8f" stroke-dasharray="3 2"/>
          <g fill="none" stroke="#4a70c8">
            <path d="M304.500 240v108" stroke-width="1.500"/>
            <path d="M302 240.500h13M302 348.500h14M302.500 238.500l4 4M302.500 346.500l4 4"/>
            <path d="M322.500 262v15A71 71 0 0 1 393 348M386 348.500h14M391 346l4 4M320 278l4-3"/>
          </g>
          <path d="M322.500 238v8M320 241h5" stroke="#8b1a8b" fill="none"/>
          <text transform="translate(301 302) rotate(-90)" font-size="6" font-weight="700" fill="#e8b030">2500.0</text>
          <text transform="translate(368 289) rotate(42)" font-size="6" font-weight="700" fill="#d9a030">90.000°</text>
          <path d="M321.500 241.500h18v10h-18z" fill="#fff" stroke="#bbb"/>
          <text x="324" y="249" font-size="6" fill="#333">垂直</text>
          <ellipse cx="337" cy="352.500" rx="51" ry="11.500" fill="none" stroke="#a82222"/>
          <text x="298" y="354" font-size="6" fill="#ccc">创建了 11 个踢面，剩余 11 个</text>
          <path d="M226.500 385L282 352l-2-2 13 3-6 10-2-4z" fill="#f63a35"/>
        </svg>
        <div class="doc">
          <svg width="6" height="7"><path d="M0 5.500h5" stroke="#ddd" stroke-width="1.500"/></svg>
          <svg width="6" height="7"><path d="M1.500 1.500h4v3M.5 3.500h3v3h-3z" fill="none" stroke="#ddd"/></svg>
          <svg width="6" height="7"><path d="M1 1.500l4 4.500M5 1.500L1 6" stroke="#ddd" stroke-width="1.400"/></svg>
        </div>
        <svg class="cube" width="70" height="74" viewBox="0 0 70 74">
          <circle cx="34.500" cy="36" r="26.500" fill="none" stroke="#4e4e4e" stroke-width="6"/>
          <path d="M22 23h26v26H22z" fill="#767676"/><path d="M27 27h16v17H27z" fill="#686e73"/>
          <text transform="translate(32 31) rotate(90)" font-size="10" fill="#4d5257">上</text>
          <g font-size="9" fill="#8a8a8a" text-anchor="middle"><text x="35" y="11">北</text><text x="7" y="40">西</text><text x="63" y="40">东</text><text x="35" y="68">南</text></g>
        </svg>
        <div class="nav">
          <svg width="12" height="14"><circle cx="5.500" cy="6" r="4" fill="#777" stroke="#bbb"/><circle cx="5.500" cy="6" r="1.800" fill="#999" stroke="#ccc"/><circle cx="9.500" cy="10" r="2" fill="#4b78a8"/></svg>
          <svg width="12" height="12"><path d="M3 3h5v4H3z" fill="#5c9a4b"/><circle cx="8" cy="8" r="1.500" fill="#9c9"/></svg>
        </div>
      </div>
      <div class="vs"><i class="dd up"></i><i class="thumb"></i></div>
      <div class="bar"><span class="scale">1  :  100</span>
        <div class="tools">${Array.from({ length: 14 }, (_, i) => icon(`v${i + 1}`))}</div><i class="lt"></i><i class="thumb"></i></div>`;
  }
}

@customElement("status-bar")
export class StatusBar extends LitElement {
  static styles = [base, css`
    :host { display: flex; align-items: center; height: 12px; background: linear-gradient(#e4e4e4, #c9c9c9); border-top: 1px solid #bbb; color: #222; }
    .msg { flex: 1; font-weight: 500; padding-left: 1px; }
    .pick { display: grid; align-items: center; color: #666; }
    .pick > * { grid-area: 1 / 1; }
    .pick .dd { justify-self: end; margin-right: 3px; }
    select { height: 10px; background: #fff; padding: 0 2px; }
    .a { width: 103px; }
    .b { width: 78px; }
    .mid { display: flex; align-items: center; gap: 3px; margin-right: 82px; }
    .mid .z { margin-right: 8px; font-weight: 500; }
    .end { display: flex; align-items: center; padding-right: 31px; }
    .set { display: flex; gap: 3px; }
  `];

  render() {
    return html`<span class="msg">垂直</span>
      <div class="mid">${icon("ws")}<span class="pick"><select class="a" aria-label="工作集"><option></option></select>${caret}</span>
        ${icon("fil")}<span class="z">:0</span>${icon("grayA")}${icon("grayB")}
        <span class="pick"><select class="b" aria-label="设计选项"><option>主模型</option></select>${caret}</span></div>
      <div class="end"><div class="set">${["y1", "y2", "y3", "y4", "y5", "y6"].map((n) => icon(n))}</div><span>:0</span></div>`;
  }
}

@customElement("app-root")
export class AppRoot extends LitElement {
  static styles = [base, css`
    :host { display: flex; flex-direction: column; position: relative; height: 100vh; overflow: hidden; padding-left: 2px; font: 6px/9px "Noto Sans", "Noto Sans CJK SC", sans-serif; background: linear-gradient(#2b5288 0 36px, #d3dcdf 36px 515px, #1d3f70 515px); }
    .work { flex: 1; min-height: 0; display: grid; grid-template-columns: 118px minmax(0, 1fr) 107px; }
    .logo { position: absolute; left: 2px; top: 0; width: 22px; height: 20px; background: linear-gradient(#d0d0d0, #8f8f8f); border: 1px solid #777; border-top: 0; }
    .mark { position: absolute; right: 4px; bottom: 1px; width: 164px; color: rgba(40, 40, 40, 0.58); pointer-events: none; }
    .cells { display: grid; grid-template-columns: 68px repeat(3, 1fr); height: 32px; border: 1px solid rgba(60, 60, 60, 0.3); font-size: 31px; line-height: 30px; font-weight: 700; }
    .cells span { display: flex; justify-content: center; align-items: center; border-right: 1px solid rgba(60, 60, 60, 0.3); background: linear-gradient(rgba(60, 60, 60, 0.3), rgba(60, 60, 60, 0.3)) center / 100% 1px no-repeat; }
    .cells span:last-child { border: 0; }
    .url { display: flex; justify-content: space-between; font: 11px/16px "Liberation Sans", sans-serif; color: rgba(40, 40, 40, 0.75); }
  `];

  render() {
    return html`
      <title-bar></title-bar>
      <ribbon-bar></ribbon-bar>
      <main class="work"><property-palette></property-palette><model-view></model-view><project-browser></project-browser></main>
      <status-bar></status-bar>
      <button class="logo" aria-label="应用程序菜单">
        <svg width="20" height="18" viewBox="0 0 20 18"><path d="M2 3l4-2h6c4 1 4 6 1 8l3 6-3 1.500L9 10l-1 6-4-1.500L6 5z" fill="#17386f"/><path d="M6 5l4-1.500c3 .5 2 4-.5 4.500L6 9z" fill="#5c86c4"/><path d="M2 3l4 2-1 10-1-.5L5 6z" fill="#0b1f47"/></svg>
      </button>
      <div class="mark">
        <div class="cells"><span>BIM</span><span>教</span><span>程</span><span>网</span></div>
        <div class="url">${[..."www.ifbim.com"].map((c) => html`<span>${c}</span>`)}</div>
      </div>`;
  }
}
